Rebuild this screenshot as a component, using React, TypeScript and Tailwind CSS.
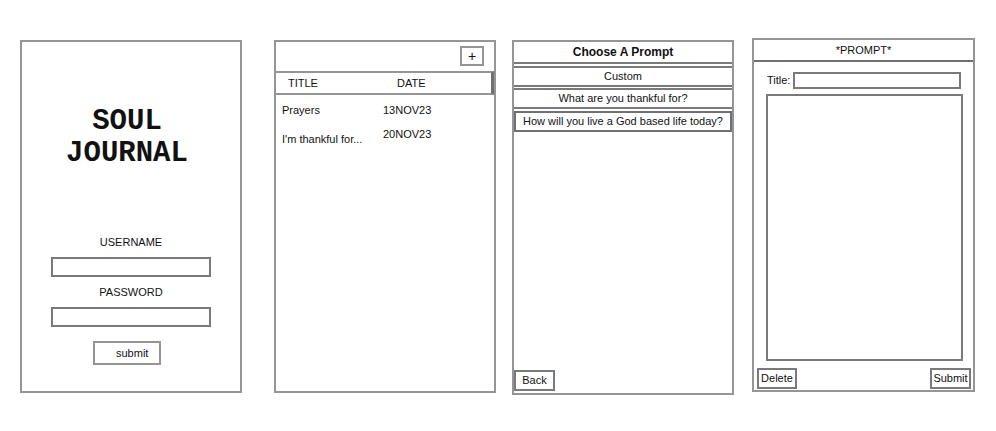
const frame = 'border-2 border-[#959595] bg-white';
const box = 'border-2 border-[#7a7a7a] bg-white';

function LoginPanel() {
  return (
    <div className={`ml-[20px] mt-[40px] w-[222px] h-[353px] flex flex-col items-center ${frame}`}>
      <h1 className="mt-[64px] mr-[8px] text-center font-['Liberation_Mono',monospace] text-[29px] leading-[32px] font-bold text-[#111]">
        SOUL
        <br />
        JOURNAL
      </h1>
      <label className="mt-[65px] text-[11px] leading-[14px]">USERNAME</label>
      <input className={`mt-[8px] w-[160px] h-[20px] outline-none ${box}`} />
      <label className="mt-[8px] text-[11px] leading-[14px]">PASSWORD</label>
      <input type="password" className={`mt-[8px] w-[160px] h-[20px] outline-none ${box}`} />
      <button className={`mt-[14px] mr-[8px] w-[68px] h-[24px] pl-[21px] text-left text-[11px] leading-[14px] ${frame}`}>
        submit
      </button>
    </div>
  );
}

const entries = [
  { title: 'Prayers', date: '13NOV23', shift: '' },
  { title: "I'm thankful for...", date: '20NOV23', shift: 'mt-[5px]' },
];

function ListPanel() {
  return (
    <div className={`ml-[32px] mt-[40px] w-[222px] h-[353px] flex flex-col ${frame}`}>
      <div className="h-[29px] flex justify-end pt-[4px] pr-[10px]">
        <button className={`w-[24px] h-[20px] flex items-center justify-center text-[14px] leading-none ${frame}`}>
          +
        </button>
      </div>
      <div className="h-[24px] flex items-center pl-[12px] border-y-2 border-r-[3px] border-[#959595] border-r-[#707070] text-[11px]">
        <span className="w-[109px]">TITLE</span>
        <span>DATE</span>
      </div>
      <div className="flex flex-col gap-[10px] mt-[8px]">
        {entries.map((e) => (
          <div key={e.date} className="flex items-start pl-[6px] text-[11px] leading-[14px]">
            <span className={`w-[101px] ${e.shift}`}>{e.title}</span>
            <span>{e.date}</span>
          </div>
        ))}
      </div>
    </div>
  );
}

const prompts = [
  { text: 'Custom', gap: 'mt-[2px]' },
  { text: 'What are you thankful for?', gap: 'mt-[1px]' },
  { text: 'How will you live a God based life today?', gap: 'mt-[2px] border-x-2 border-[#707070]' },
];

function PromptPanel() {
  return (
    <div className={`ml-[16px] mt-[40px] w-[222px] h-[355px] flex flex-col ${frame}`}>
      <div className="h-[22px] border-b-2 border-[#7a7a7a] flex items-center justify-center text-[12px] font-bold">
        Choose A Prompt
      </div>
      {prompts.map((p) => (
        <div
          key={p.text}
          className={`h-[21px] border-y-2 border-[#7a7a7a] flex items-center justify-center text-[11px] ${p.gap}`}
        >
          {p.text}
        </div>
      ))}
      <div className="flex-1" />
      <button className={`self-start mb-[2px] w-[41px] h-[21px] text-[11px] ${box}`}>Back</button>
    </div>
  );
}

function EntryPanel() {
  return (
    <div className={`ml-[18px] mt-[38px] w-[223px] h-[354px] flex flex-col ${frame}`}>
      <div className="h-[22px] border-b-2 border-[#707070] flex items-center justify-center text-[11px]">
        *PROMPT*
      </div>
      <div className="mt-[10px] flex items-center pl-[13px] text-[11px]">
        <span>Title:</span>
        <input className={`ml-[3px] w-[168px] h-[17px] outline-none ${box}`} />
      </div>
      <textarea className={`mt-[5px] ml-[12px] w-[197px] h-[267px] resize-none outline-none ${box}`} />
      <div className="mt-[7px] flex justify-between pl-[3px] pr-[2px]">
        <button className={`w-[40px] h-[21px] text-[11px] ${box}`}>Delete</button>
        <button className={`w-[41px] h-[21px] text-[11px] ${box}`}>Submit</button>
      </div>
    </div>
  );
}

export default function App() {
  return (
    <div className="w-[996px] h-[431px] bg-white flex items-start font-['Liberation_Sans',Arial,sans-serif] text-[#111]">
      <LoginPanel />
      <ListPanel />
      <PromptPanel />
      <EntryPanel />
    </div>
  );
}
